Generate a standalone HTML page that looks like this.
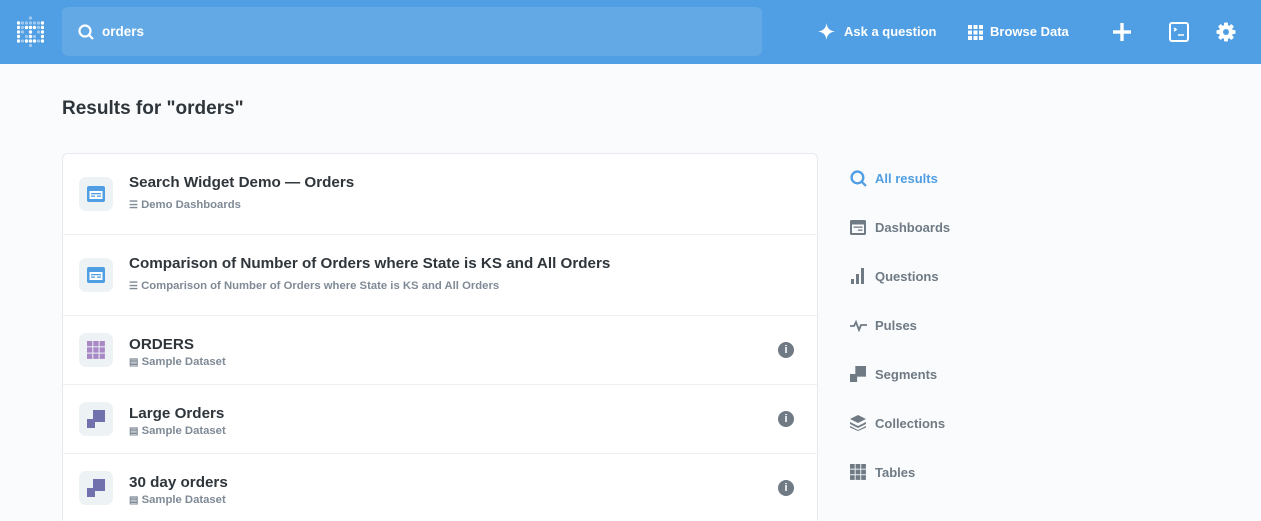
<!DOCTYPE html>
<html><head><meta charset="utf-8"><style>
*{box-sizing:border-box;margin:0;padding:0}
html,body{width:1261px;height:521px;overflow:hidden}
body{background:#f9fbfc;font-family:"Liberation Sans",sans-serif;color:#2e353b;position:relative}
.hdr{position:absolute;left:0;top:0;width:1261px;height:64px;background:#509ee3}
.search{position:absolute;left:62px;top:7px;width:700px;height:49px;background:#63a9e6;border-radius:6px}
.search span{position:absolute;left:40px;top:17px;color:#fff;font-weight:bold;font-size:13.5px}
.nav{position:absolute;color:#fff;font-weight:bold;font-size:13px;top:24px}
h1{position:absolute;left:62px;top:98px;font-size:19px;font-weight:bold}
.card{position:absolute;left:62px;top:153px;width:756px;height:380px;background:#fff;border:1px solid #e6eaee;border-radius:6px}
.row{position:absolute;left:0;width:754px;border-bottom:1px solid #edf0f2}
.ib{position:absolute;left:16px;width:34px;height:34px;border-radius:7px;background:#edf2f5}
.t{position:absolute;left:66px;font-size:15.2px;font-weight:bold;color:#2e353b;white-space:nowrap}
.s{position:absolute;left:66px;font-size:11.3px;font-weight:bold;color:#7f8a96;white-space:nowrap}
.info{position:absolute;left:715px;width:16px;height:16px;border-radius:50%;background:#6f7a85;color:#fff;font-size:11px;font-weight:bold;text-align:center;line-height:16px}
.side{position:absolute;left:850px;font-size:13px;font-weight:bold;color:#6f7a85}
.side span{position:absolute;left:25px;top:1px;white-space:nowrap}
</style></head><body>
<div class="hdr">
<svg style="position:absolute;left:17px;top:16px" width="27" height="32" viewBox="0 0 27 32" fill="#fff">
<g opacity=".45"><circle cx="13.5" cy="2" r="1.6"/><circle cx="5.5" cy="7" r="1.6"/><circle cx="9.5" cy="7" r="1.6"/><circle cx="13.5" cy="7" r="1.6"/><circle cx="17.5" cy="7" r="1.6"/><circle cx="21.5" cy="7" r="1.6"/><circle cx="5.5" cy="11.5" r="1.6"/><circle cx="21.5" cy="11.5" r="1.6"/><circle cx="5.5" cy="16" r="1.6"/><circle cx="21.5" cy="16" r="1.6"/><circle cx="9.5" cy="20.5" r="1.6"/><circle cx="17.5" cy="20.5" r="1.6"/><circle cx="5.5" cy="25" r="1.6"/><circle cx="21.5" cy="25" r="1.6"/><circle cx="13.5" cy="29.5" r="1.6"/></g>
<circle cx="1.5" cy="7" r="1.7"/><circle cx="25.5" cy="7" r="1.7"/><circle cx="1.5" cy="11.5" r="1.7"/><circle cx="9.5" cy="11.5" r="1.7"/><circle cx="13.5" cy="11.5" r="1.7"/><circle cx="17.5" cy="11.5" r="1.7"/><circle cx="25.5" cy="11.5" r="1.7"/><circle cx="1.5" cy="16" r="1.7"/><circle cx="13.5" cy="16" r="1.7"/><circle cx="25.5" cy="16" r="1.7"/><circle cx="1.5" cy="20.5" r="1.7"/><circle cx="13.5" cy="20.5" r="1.7"/><circle cx="25.5" cy="20.5" r="1.7"/><circle cx="1.5" cy="25" r="1.7"/><circle cx="9.5" cy="25" r="1.7"/><circle cx="13.5" cy="25" r="1.7"/><circle cx="17.5" cy="25" r="1.7"/><circle cx="25.5" cy="25" r="1.7"/>
</svg>
<div class="search"><svg style="position:absolute;left:16px;top:17px" width="16" height="16" viewBox="0 0 16 16" fill="none" stroke="#fff" stroke-width="2.2"><circle cx="7" cy="7" r="5.5"/><path d="M11 11l4 4"/></svg><span>orders</span></div>
<svg style="position:absolute;left:818px;top:23px" width="17" height="17" viewBox="0 0 16 16" fill="#fff"><path d="M8 0C8.6 5 11 7.4 16 8 11 8.6 8.6 11 8 16 7.4 11 5 8.6 0 8 5 7.4 7.4 5 8 0z"/></svg>
<div class="nav" style="left:844px">Ask a question</div>
<svg style="position:absolute;left:968px;top:25px" width="15" height="15" viewBox="0 0 15 15" fill="#fff"><rect x="0" y="0" width="4" height="4"/><rect x="5.5" y="0" width="4" height="4"/><rect x="11" y="0" width="4" height="4"/><rect x="0" y="5.5" width="4" height="4"/><rect x="5.5" y="5.5" width="4" height="4"/><rect x="11" y="5.5" width="4" height="4"/><rect x="0" y="11" width="4" height="4"/><rect x="5.5" y="11" width="4" height="4"/><rect x="11" y="11" width="4" height="4"/></svg>
<div class="nav" style="left:990px">Browse Data</div>
<svg style="position:absolute;left:1113px;top:23px" width="18" height="18" viewBox="0 0 18 18" fill="#fff"><rect x="7.3" y="0" width="3.4" height="18"/><rect x="0" y="7.3" width="18" height="3.4"/></svg>
<svg style="position:absolute;left:1169px;top:22px" width="20" height="20" viewBox="0 0 20 20" fill="none" stroke="#fff" stroke-width="2"><rect x="1" y="1" width="18" height="18" rx="2"/><path d="M5 6l2 1.5L5 9M9 13h6" stroke-width="1.6"/></svg>
<svg style="position:absolute;left:1216px;top:22px" width="20" height="20" viewBox="0 0 20 20"><g fill="#fff"><circle cx="10" cy="10" r="7"/><g><rect x="8" y="0.5" width="4" height="19" rx="1"/><rect x="8" y="0.5" width="4" height="19" rx="1" transform="rotate(45 10 10)"/><rect x="8" y="0.5" width="4" height="19" rx="1" transform="rotate(90 10 10)"/><rect x="8" y="0.5" width="4" height="19" rx="1" transform="rotate(135 10 10)"/></g></g><circle cx="10" cy="10" r="3" fill="#509ee3"/></svg>
</div>
<h1>Results for "orders"</h1>
<div class="card">
<div class="row" style="top:0;height:81px"><div class="ib" style="top:23px"><svg style="position:absolute;left:8px;top:9px" width="18" height="16" viewBox="0 0 18 16"><rect width="18" height="16" rx="2" fill="#509ee3"/><rect x="2.5" y="5" width="13" height="8" fill="#fff"/><rect x="4" y="7" width="10" height="1.3" fill="#509ee3"/><rect x="4" y="9.5" width="4" height="1.3" fill="#509ee3"/><rect x="10" y="9.5" width="4" height="1.3" fill="#509ee3"/></svg></div>
<div class="t" style="top:20px">Search Widget Demo — Orders</div><div class="s" style="top:45px"><span style="font-size:10px">☰</span> Demo Dashboards</div></div>
<div class="row" style="top:81px;height:81px"><div class="ib" style="top:23px"><svg style="position:absolute;left:8px;top:9px" width="18" height="16" viewBox="0 0 18 16"><rect width="18" height="16" rx="2" fill="#509ee3"/><rect x="2.5" y="5" width="13" height="8" fill="#fff"/><rect x="4" y="7" width="10" height="1.3" fill="#509ee3"/><rect x="4" y="9.5" width="4" height="1.3" fill="#509ee3"/><rect x="10" y="9.5" width="4" height="1.3" fill="#509ee3"/></svg></div>
<div class="t" style="top:20px">Comparison of Number of Orders where State is KS and All Orders</div><div class="s" style="top:45px"><span style="font-size:10px">☰</span> Comparison of Number of Orders where State is KS and All Orders</div></div>
<div class="row" style="top:162px;height:69px"><div class="ib" style="top:17px"><svg style="position:absolute;left:8px;top:8px" width="18" height="18" viewBox="0 0 18 18" fill="#a989c5"><rect x="0" y="0" width="5.3" height="5.3"/><rect x="6.3" y="0" width="5.3" height="5.3"/><rect x="12.6" y="0" width="5.3" height="5.3"/><rect x="0" y="6.3" width="5.3" height="5.3"/><rect x="6.3" y="6.3" width="5.3" height="5.3"/><rect x="12.6" y="6.3" width="5.3" height="5.3"/><rect x="0" y="12.6" width="5.3" height="5.3"/><rect x="6.3" y="12.6" width="5.3" height="5.3"/><rect x="12.6" y="12.6" width="5.3" height="5.3"/></svg></div>
<div class="t" style="top:20px">ORDERS</div><div class="s" style="top:40px"><span style="font-size:10px">▤</span> Sample Dataset</div><div class="info" style="top:26px">i</div></div>
<div class="row" style="top:231px;height:69px"><div class="ib" style="top:17px"><svg style="position:absolute;left:8px;top:8px" width="18" height="18" viewBox="0 0 18 18" fill="#7172ad"><rect x="6" y="0" width="12" height="12"/><rect x="0" y="9" width="8" height="9"/></svg></div>
<div class="t" style="top:20px">Large Orders</div><div class="s" style="top:40px"><span style="font-size:10px">▤</span> Sample Dataset</div><div class="info" style="top:26px">i</div></div>
<div class="row" style="top:300px;height:80px;border:none"><div class="ib" style="top:17px"><svg style="position:absolute;left:8px;top:8px" width="18" height="18" viewBox="0 0 18 18" fill="#7172ad"><rect x="6" y="0" width="12" height="12"/><rect x="0" y="9" width="8" height="9"/></svg></div>
<div class="t" style="top:20px">30 day orders</div><div class="s" style="top:40px"><span style="font-size:10px">▤</span> Sample Dataset</div><div class="info" style="top:26px">i</div></div>
</div>
<div class="side" style="top:170px;color:#509ee3"><svg width="17" height="17" viewBox="0 0 16 16" fill="none" stroke="#509ee3" stroke-width="2.2" style="position:absolute;top:0"><circle cx="7" cy="7" r="5.5"/><path d="M11 11l4 4"/></svg><span>All results</span></div>
<div class="side" style="top:219px"><svg width="16" height="15" viewBox="0 0 16 15" style="position:absolute;top:1px"><rect width="16" height="15" rx="1.5" fill="#6f7a85"/><rect x="2" y="4.5" width="12" height="8.5" fill="#f9fbfc"/><rect x="3.5" y="6.5" width="9" height="1.3" fill="#6f7a85"/><rect x="8" y="9.5" width="4.5" height="1.3" fill="#6f7a85"/></svg><span>Dashboards</span></div>
<div class="side" style="top:268px"><svg width="15" height="16" viewBox="0 0 15 16" fill="#6f7a85" style="position:absolute;top:0"><rect x="1" y="11" width="3" height="5"/><rect x="6" y="6" width="3" height="10"/><rect x="11" y="0" width="3" height="16"/></svg><span>Questions</span></div>
<div class="side" style="top:317px"><svg width="18" height="14" viewBox="0 0 18 14" fill="none" stroke="#6f7a85" stroke-width="1.8" style="position:absolute;top:1px"><path d="M0 8h4l2-4 3 8 2-5h6"/></svg><span>Pulses</span></div>
<div class="side" style="top:366px"><svg width="16" height="16" viewBox="0 0 18 18" fill="#6f7a85" style="position:absolute;top:0"><rect x="6" y="0" width="12" height="12"/><rect x="0" y="9" width="8" height="9"/></svg><span>Segments</span></div>
<div class="side" style="top:415px"><svg width="16" height="16" viewBox="0 0 16 16" fill="#6f7a85" style="position:absolute;top:0"><path d="M8 0l8 4-8 4-8-4z"/><path d="M0 7l8 4 8-4v2l-8 4-8-4z"/><path d="M0 11l8 4 8-4v1.5l-8 3.5-8-3.5z"/></svg><span>Collections</span></div>
<div class="side" style="top:464px"><svg width="16" height="16" viewBox="0 0 18 18" fill="#6f7a85" style="position:absolute;top:0"><rect x="0" y="0" width="5.3" height="5.3"/><rect x="6.3" y="0" width="5.3" height="5.3"/><rect x="12.6" y="0" width="5.3" height="5.3"/><rect x="0" y="6.3" width="5.3" height="5.3"/><rect x="6.3" y="6.3" width="5.3" height="5.3"/><rect x="12.6" y="6.3" width="5.3" height="5.3"/><rect x="0" y="12.6" width="5.3" height="5.3"/><rect x="6.3" y="12.6" width="5.3" height="5.3"/><rect x="12.6" y="12.6" width="5.3" height="5.3"/></svg><span>Tables</span></div>
</body></html>
